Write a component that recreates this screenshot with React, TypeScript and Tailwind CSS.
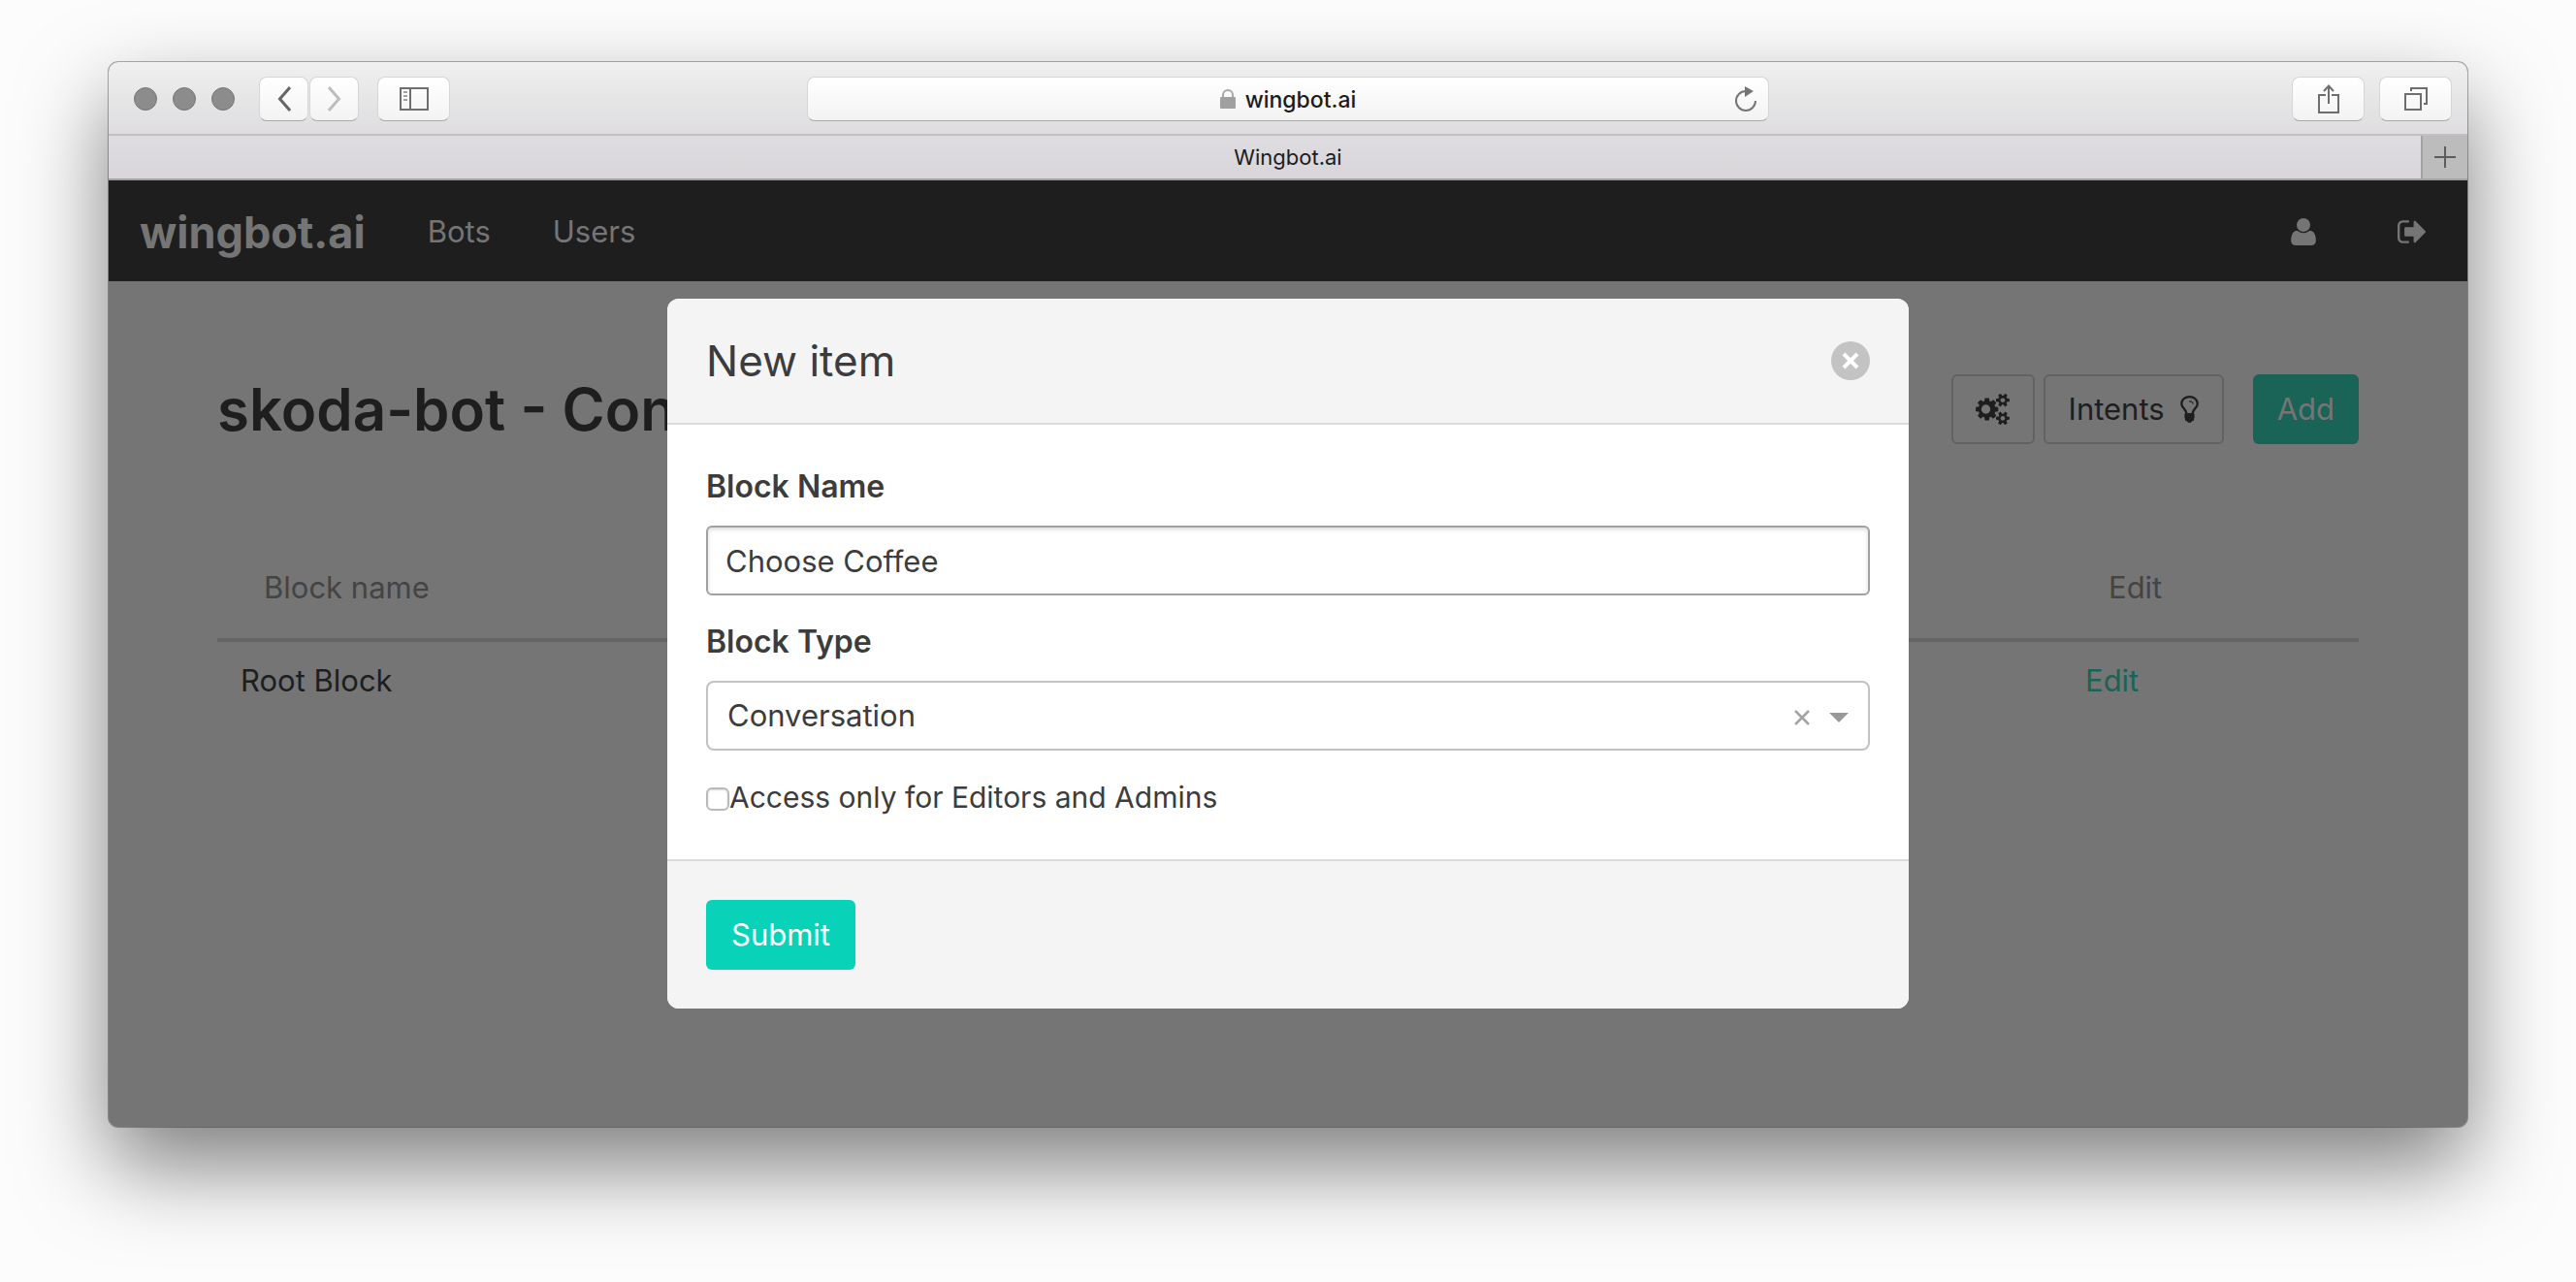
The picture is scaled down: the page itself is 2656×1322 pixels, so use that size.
import { useState } from "react";
import type { ReactNode } from "react";

function UserIcon() {
  return (
    <svg viewBox="0 0 1408 1536" className="h-7 w-[26px]" fill="currentColor" aria-hidden="true">
      <path
        transform="translate(0 1408) scale(1 -1)"
        d="M1408 131q0 -120 -73 -189.5t-194 -69.5h-874q-121 0 -194 69.5t-73 189.5q0 53 3.5 103.5t14 109t26.5 108.5t43 97.5t62 81t85.5 53.5t111.5 20q9 0 42 -21.5t74.5 -48t108 -48t133.5 -21.5t133.5 21.5t108 48t74.5 48t42 21.5q61 0 111.5 -20t85.5 -53.5t62 -81t43 -97.5t26.5 -108.5t14 -109t3.5 -103.5zM1088 1024q0 -159 -112.5 -271.5t-271.5 -112.5t-271.5 112.5t-112.5 271.5t112.5 271.5t271.5 112.5t271.5 -112.5t112.5 -271.5z"
      />
    </svg>
  );
}

function SignOutIcon() {
  return (
    <svg viewBox="64 256 1568 1280" className="h-6 w-[29px]" fill="currentColor" aria-hidden="true">
      <path d="M704 1440q0 4 1 20t.5 26.5-3 23.5-10 19.5-20.5 6.5h-320q-119 0-203.5-84.5t-84.5-203.5v-704q0-119 84.5-203.5t203.5-84.5h320q13 0 22.5 9.5t9.5 22.5q0 4 1 20t.5 26.5-3 23.5-10 19.5-20.5 6.5h-320q-66 0-113 47t-47 113v704q0 66 47 113t113 47h312l11.5 1 11.5 3 8 5.5 7 9 2 13.5zm928-544q0 26-19 45l-544 544q-19 19-45 19t-45-19-19-45v-288h-448q-26 0-45-19t-19-45v-384q0-26 19-45t45-19h448v-288q0-26 19-45t45-19 45 19l544 544q19 19 19 45z" />
    </svg>
  );
}

function CogsIcon() {
  return (
    <svg viewBox="0 0 1920 1762" className="h-8 w-[35px]" fill="currentColor" aria-hidden="true">
      <path
        transform="translate(0 1521) scale(1 -1)"
        fillRule="evenodd"
        d="M832 640q0 -106 -75 -181t-181 -75t-181 75t-75 181t75 181t181 75t181 -75t75 -181zM1664 128q0 52 -38 90t-90 38t-90 -38t-38 -90q0 -53 37.5 -90.5t90.5 -37.5t90.5 37.5t37.5 90.5zM1664 1152q0 52 -38 90t-90 38t-90 -38t-38 -90q0 -53 37.5 -90.5t90.5 -37.5t90.5 37.5t37.5 90.5zM1280 731v-185q0 -10 -7 -19.5t-16 -10.5l-155 -24q-11 -35 -32 -76q34 -48 90 -115q7 -11 7 -20q0 -12 -7 -19q-23 -30 -82.5 -89.5t-78.5 -59.5q-11 0 -21 7l-115 90q-37 -19 -77 -31q-11 -108 -23 -155q-7 -24 -30 -24h-186q-11 0 -20 7.5t-10 17.5l-23 153q-34 10 -75 31l-118 -89q-7 -7 -20 -7q-11 0 -21 8q-144 133 -144 160q0 9 7 19q10 14 41 53t47 61q-23 44 -35 82l-152 24q-10 1 -17 9.5t-7 19.5v185q0 10 7 19.5t16 10.5l155 24q11 35 32 76q-34 48 -90 115q-7 11 -7 20q0 12 7 20q22 30 82 89t79 59q11 0 21 -7l115 -90q34 18 77 32q11 108 23 154q7 24 30 24h186q11 0 20 -7.5t10 -17.5l23 -153q34 -10 75 -31l118 89q8 7 20 7q11 0 21 -8q144 -133 144 -160q0 -8 -7 -19q-12 -16 -42 -54t-45 -60q23 -48 34 -82l152 -23q10 -2 17 -10.5t7 -19.5zM1920 198v-140q0 -16 -149 -31q-12 -27 -30 -52q51 -113 51 -138q0 -4 -4 -7q-122 -71 -124 -71q-8 0 -46 47t-52 68q-20 -2 -30 -2t-30 2q-14 -21 -52 -68t-46 -47q-2 0 -124 71q-4 3 -4 7q0 25 51 138q-18 25 -30 52q-149 15 -149 31v140q0 16 149 31q13 29 30 52q-51 113 -51 138q0 4 4 7q4 2 35 20t59 34t30 16q8 0 46 -46.5t52 -67.5q20 2 30 2t30 -2q51 71 92 112l6 2q4 0 124 -70q4 -3 4 -7q0 -25 -51 -138q17 -23 30 -52q149 -15 149 -31zM1920 1222v-140q0 -16 -149 -31q-12 -27 -30 -52q51 -113 51 -138q0 -4 -4 -7q-122 -71 -124 -71q-8 0 -46 47t-52 68q-20 -2 -30 -2t-30 2q-14 -21 -52 -68t-46 -47q-2 0 -124 71q-4 3 -4 7q0 25 51 138q-18 25 -30 52q-149 15 -149 31v140q0 16 149 31q13 29 30 52q-51 113 -51 138q0 4 4 7q4 2 35 20t59 34t30 16q8 0 46 -46.5t52 -67.5q20 2 30 2t30 -2q51 71 92 112l6 2q4 0 124 -70q4 -3 4 -7q0 -25 -51 -138q17 -23 30 -52q149 -15 149 -31z"
      />
    </svg>
  );
}

function BulbIcon() {
  return (
    <svg viewBox="0 0 1024 1536" className="h-7 w-[19px]" fill="currentColor" aria-hidden="true">
      <path
        transform="translate(0 1408) scale(1 -1)"
        fillRule="evenodd"
        d="M736 960q0 -13 -9.5 -22.5t-22.5 -9.5t-22.5 9.5t-9.5 22.5q0 46 -54 71t-106 25q-13 0 -22.5 9.5t-9.5 22.5t9.5 22.5t22.5 9.5q50 0 99.5 -16t87 -54t37.5 -90zM896 960q0 72 -34.5 134t-90 101.5t-123 62t-136.5 22.5t-136.5 -22.5t-123 -62t-90 -101.5t-34.5 -134q0 -101 68 -180q10 -11 30.5 -33t30.5 -33q128 -153 141 -298h228q13 145 141 298q10 11 30.5 33t30.5 33q68 79 68 180zM1024 960q0 -155 -103 -268q-45 -49 -74.5 -87t-59.5 -95.5t-34 -107.5q47 -28 47 -82q0 -37 -25 -64q25 -27 25 -64q0 -52 -45 -81q13 -23 13 -47q0 -46 -31.5 -71t-77.5 -25q-20 -44 -60 -70t-87 -26t-87 26t-60 70q-46 0 -77.5 25t-31.5 71q0 24 13 47q-45 29 -45 81q0 37 25 64q-25 27 -25 64q0 54 47 82q-4 50 -34 107.5t-59.5 95.5t-74.5 87q-103 113 -103 268q0 99 44.5 184.5t117 142t164 89t186.5 32.5t186.5 -32.5t164 -89t117 -142t44.5 -184.5z"
      />
    </svg>
  );
}

function ToolButton({ label, wide, children }: { label: string; wide?: boolean; children: ReactNode }) {
  return (
    <button
      type="button"
      aria-label={label}
      className={
        "flex h-[46px] items-center justify-center rounded-lg border border-[#d6d6d6] border-b-[#a9a9a9] bg-linear-to-b from-white to-[#f3f3f3] text-[#6e6e6e] " +
        (wide ? "w-[75px]" : "w-[51px]")
      }
    >
      {children}
    </button>
  );
}

function Toolbar() {
  return (
    <div className="grid h-[76px] grid-cols-[1fr_minmax(0,992px)_1fr] items-center border-b-2 border-[#c1c0c2] bg-linear-to-b from-[#f0f0f0] via-[#e6e6e6] to-[#dfdde0] pt-0.5">
      <div className="flex items-center pl-[26px]">
        <div className="flex gap-4">
          {["Close", "Minimize", "Zoom"].map((name) => (
            <button key={name} type="button" aria-label={name} className="size-6 rounded-full border border-[#757575] bg-[#8c8c8c]" />
          ))}
        </div>
        <div className="ml-[25px] flex gap-px">
          <ToolButton label="Back">
            <svg viewBox="0 0 14 28" className="h-7 w-3.5" fill="none" stroke="#666" strokeWidth="3" aria-hidden="true">
              <path d="M13 2 2.5 14 13 26" />
            </svg>
          </ToolButton>
          <ToolButton label="Forward">
            <svg viewBox="0 0 14 28" className="h-7 w-3.5" fill="none" stroke="#bdbdbd" strokeWidth="3" aria-hidden="true">
              <path d="M1 2 11.5 14 1 26" />
            </svg>
          </ToolButton>
        </div>
        <div className="ml-[19px]">
          <ToolButton label="Sidebar" wide>
            <svg viewBox="0 0 30 28" className="h-7 w-[30px]" fill="none" stroke="currentColor" strokeWidth="2" aria-hidden="true">
              <path d="M1 3h28v22H1zM11 3v22" />
              <path d="M4 7h4M4 11h4M4 15h4" stroke="#a0a0a0" />
            </svg>
          </ToolButton>
        </div>
      </div>
      <div className="relative flex h-[46px] items-center justify-center gap-2.5 rounded-lg border border-[#d6d6d6] border-b-[#a9a9a9] bg-linear-to-b from-white to-[#f3f3f3]">
        <svg viewBox="0 0 16 20" className="h-5 w-4" aria-hidden="true">
          <path d="M3 9V6a5 5 0 0 1 10 0v3" fill="none" stroke="#a8a8a8" strokeWidth="2" />
          <rect y="8" width="16" height="12" rx="1" fill="#a0a0a0" />
        </svg>
        <input
          aria-label="Address"
          defaultValue="wingbot.ai"
          className="field-sizing-content bg-transparent pt-0.5 text-[23px] font-medium text-[#1c1c1c] outline-none"
        />
        <button type="button" aria-label="Reload" className="absolute right-3 text-[#757575]">
          <svg viewBox="0 0 22 26" className="h-[26px] w-[22px]" aria-hidden="true">
            <path d="M11 5A10 10 0 1 0 21 15" fill="none" stroke="currentColor" strokeWidth="2" />
            <path d="M10 0 19 5 10 11z" fill="currentColor" />
          </svg>
        </button>
      </div>
      <div className="flex justify-end gap-[15px] pr-4">
        <ToolButton label="Share" wide>
          <svg viewBox="0 0 24 30" className="h-[30px] w-6" fill="none" stroke="currentColor" strokeWidth="2" aria-hidden="true">
            <path d="M9 11H2v18h20V11h-7M12 20V2M7 7l5-5.500 5 5.500" />
          </svg>
        </ToolButton>
        <ToolButton label="Tabs" wide>
          <svg viewBox="0 0 24 24" className="size-6" fill="none" stroke="currentColor" strokeWidth="2" aria-hidden="true">
            <path d="M1 7h16v16H1z" />
            <path d="M7 4V1h16v16h-3" />
          </svg>
        </ToolButton>
      </div>
    </div>
  );
}

function TabBar() {
  return (
    <div className="flex h-[46px] border-b-2 border-[#a3a3a3] bg-linear-to-b from-[#dedce0] to-[#d8d6d9]">
      <button type="button" className="flex-1 pl-12 text-[22px] text-[#1c1c1c]">
        Wingbot.ai
      </button>
      <button type="button" aria-label="New tab" className="flex w-12 items-center justify-center border-l-2 border-[#a3a3a3] bg-[#bcbcbc] text-[#5c5c5c]">
        <svg viewBox="0 0 22 22" className="size-[22px]" stroke="currentColor" strokeWidth="2" aria-hidden="true">
          <path d="M11 0v22M0 11h22" />
        </svg>
      </button>
    </div>
  );
}

function Navbar() {
  return (
    <nav className="flex h-[104px] items-center bg-[#1e1e1e] pt-0.5 text-[31px] text-[#757575]">
      <a href="#home" className="px-8 text-[45px] leading-none font-bold">
        wingbot.ai
      </a>
      <a href="#bots" className="px-8">
        Bots
      </a>
      <a href="#users" className="px-8">
        Users
      </a>
      <div className="ml-auto flex items-center gap-[84px] pr-[43px]">
        <a href="#profile" aria-label="Profile">
          <UserIcon />
        </a>
        <a href="#logout" aria-label="Sign out">
          <SignOutIcon />
        </a>
      </div>
    </nav>
  );
}

function BlocksPage() {
  return (
    <main className="px-28 pt-24 text-[31px] leading-[48px] text-[#1e1e1e]">
      <div className="flex items-center">
        <h1 className="flex-1 text-[60px] leading-[72px] font-semibold">skoda-bot - Con</h1>
        <button type="button" aria-label="Settings" className="flex h-[72px] w-[86px] items-center justify-center rounded-md border-2 border-[#626262]">
          <CogsIcon />
        </button>
        <button type="button" className="ml-[9px] flex h-[72px] items-center gap-4 rounded-md border-2 border-[#626262] px-6">
          Intents
          <BulbIcon />
        </button>
        <button type="button" className="ml-[30px] h-[72px] rounded-md bg-[#1a6357] px-[25px] text-[#757575]">
          Add
        </button>
      </div>
      <table className="mt-24 w-full table-fixed text-left">
        <colgroup>
          <col />
          <col className="w-[306px]" />
        </colgroup>
        <thead>
          <tr className="border-b-4 border-[#646464] text-[#444]">
            <th className="px-12 py-7 font-normal">Block name</th>
            <th className="px-12 py-7 font-normal">Edit</th>
          </tr>
        </thead>
        <tbody>
          <tr>
            <td className="px-6 py-4">Root Block</td>
            <td className="px-6 py-4">
              <a href="#edit" className="text-[#1a6357]">
                Edit
              </a>
            </td>
          </tr>
        </tbody>
      </table>
    </main>
  );
}

function NewItemDialog() {
  const [type, setType] = useState("Conversation");
  return (
    <form
      role="dialog"
      aria-labelledby="dialog-title"
      onSubmit={(e) => e.preventDefault()}
      className="w-full max-w-[1280px] overflow-hidden rounded-xl bg-white text-[31px] leading-[48px] text-[#3c3c3c]"
    >
      <header className="flex items-center justify-between border-b-2 border-[#dadada] bg-[#f4f4f4] p-10">
        <h2 id="dialog-title" className="text-[44px]">
          New item
        </h2>
        <button type="button" aria-label="Close" className="flex size-10 items-center justify-center rounded-full bg-[#c3c3c3]">
          <svg viewBox="0 0 18 18" className="size-[18px]" stroke="white" strokeWidth="4" aria-hidden="true">
            <path d="m2 2 14 14M16 2 2 16" />
          </svg>
        </button>
      </header>
      <div className="flex flex-col gap-6 p-10">
        <div className="flex flex-col gap-4">
          <label htmlFor="block-name" className="text-[32px] font-semibold">
            Block Name
          </label>
          <input
            id="block-name"
            defaultValue="Choose Coffee"
            className="h-[72px] rounded-md border-2 border-[#a0a0a0] bg-white px-[18px] shadow-[inset_0_2px_4px_rgba(10,10,10,0.15)] outline-none"
          />
        </div>
        <div className="flex flex-col gap-4">
          <label htmlFor="block-type" className="text-[32px] font-semibold">
            Block Type
          </label>
          <div className="relative">
            <select
              id="block-type"
              value={type}
              onChange={(e) => setType(e.target.value)}
              className="block h-[72px] w-full appearance-none rounded-lg border-2 border-[#c2c2c2] bg-white px-5 outline-none"
            >
              <option value=""></option>
              <option value="Conversation">Conversation</option>
            </select>
            <div className="pointer-events-none absolute inset-y-0 right-[22px] flex items-center gap-5 pt-1">
              <button type="button" aria-label="Clear" onClick={() => setType("")} className="pointer-events-auto">
                <svg viewBox="0 0 16 16" className="size-4" stroke="#a3a3a3" strokeWidth="2.500" aria-hidden="true">
                  <path d="m1 1 14 14M15 1 1 15" />
                </svg>
              </button>
              <svg viewBox="0 0 20 10" className="h-2.5 w-5" fill="#999" aria-hidden="true">
                <path d="M0 0h20L10 10z" />
              </svg>
            </div>
          </div>
        </div>
        <label className="flex items-center text-[30px]">
          <input
            type="checkbox"
            className="mt-1 size-6 appearance-none rounded-md border-2 border-[#b9b9b9] bg-white shadow-[inset_0_1px_2px_rgba(0,0,0,0.15)] checked:bg-[#08d3b8]"
          />
          Access only for Editors and Admins
        </label>
      </div>
      <footer className="border-t-2 border-[#dadada] bg-[#f4f4f4] p-10">
        <button type="submit" className="block h-[72px] rounded-md bg-[#08d3b8] px-[26px] text-white">
          Submit
        </button>
      </footer>
    </form>
  );
}

export default function App() {
  return (
    <div className="min-h-screen bg-[#fcfcfc] px-28 pt-16 pb-40 font-['Inter',sans-serif]">
      <div className="flex min-h-[calc(100vh-224px)] flex-col overflow-hidden rounded-[10px] bg-[#757575] shadow-[0_0_0_1px_rgba(0,0,0,0.3),0_40px_90px_rgba(0,0,0,0.5)]">
        <Toolbar />
        <TabBar />
        <div className="relative flex-1">
          <Navbar />
          <BlocksPage />
          <div className="absolute inset-0 flex items-center justify-center">
            <NewItemDialog />
          </div>
        </div>
      </div>
    </div>
  );
}
